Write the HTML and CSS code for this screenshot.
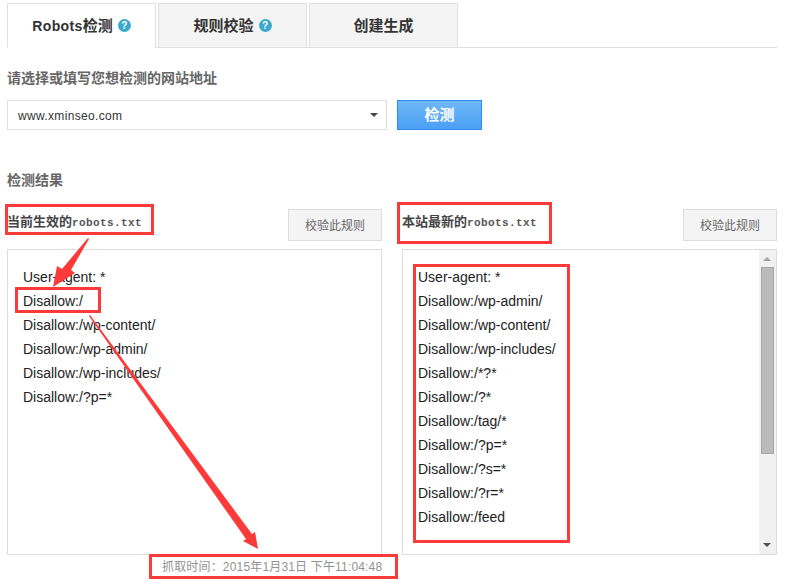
FILE: index.html
```html
<!DOCTYPE html>
<html lang="zh">
<head>
<meta charset="utf-8">
<title>Robots检测</title>
<link rel="stylesheet" href="styles.css">
</head>
<body>
<div class="page">
  <div class="tabs">
    <div class="tab active"><span><span class="tab-en">Robots</span>检测</span><span class="help">?</span></div>
    <div class="tab">规则校验<span class="help">?</span></div>
    <div class="tab">创建生成</div>
  </div>
  <h3 class="label first">请选择或填写您想检测的网站地址</h3>
  <div class="form">
    <div class="select">www.xminseo.com<span class="caret"></span></div>
    <div class="btn-check">检测</div>
  </div>
  <h3 class="label result">检测结果</h3>
  <div class="cols">
    <section class="col">
      <div class="col-head">
        <div class="col-title">当前生效的<span class="mono">robots.txt</span></div>
        <div class="btn-rule">校验此规则</div>
      </div>
      <div class="box">
        <p>User-agent: *</p>
        <p>Disallow:/</p>
        <p>Disallow:/wp-content/</p>
        <p>Disallow:/wp-admin/</p>
        <p>Disallow:/wp-includes/</p>
        <p>Disallow:/?p=*</p>
      </div>
    </section>
    <section class="col">
      <div class="col-head">
        <div class="col-title">本站最新的<span class="mono">robots.txt</span></div>
        <div class="btn-rule">校验此规则</div>
      </div>
      <div class="box box-scroll">
        <div class="lines">
          <p>User-agent: *</p>
          <p>Disallow:/wp-admin/</p>
          <p>Disallow:/wp-content/</p>
          <p>Disallow:/wp-includes/</p>
          <p>Disallow:/*?*</p>
          <p>Disallow:/?*</p>
          <p>Disallow:/tag/*</p>
          <p>Disallow:/?p=*</p>
          <p>Disallow:/?s=*</p>
          <p>Disallow:/?r=*</p>
          <p>Disallow:/feed</p>
        </div>
        <div class="scrollbar">
          <span class="sb-up"></span>
          <span class="sb-thumb"></span>
          <span class="sb-down"></span>
        </div>
      </div>
    </section>
  </div>
  <div class="time">抓取时间：2015年1月31日 下午11:04:48</div>
</div>
<svg class="marks" width="805" height="581" viewBox="0 0 805 581" aria-hidden="true">
  <g class="mark-rect">
    <rect x="6.5" y="205.5" width="146" height="28"/>
    <rect x="398.5" y="203.5" width="152" height="39"/>
    <rect x="16.5" y="288.5" width="83" height="23"/>
    <rect x="414.5" y="265.5" width="154" height="276"/>
    <rect x="150.5" y="555.5" width="246" height="22"/>
  </g>
  <polygon class="mark-fill" points="89,239 71,270 75,273 53,287 57,266 62,269 88,238"/>
  <polygon class="mark-fill" points="90,315 252,534 255,532 258,549 243,541 246,539 89,316"/>
</svg>
</body>
</html>
```
FILE: styles.css
```css
* { box-sizing: border-box; }
html, body { margin: 0; padding: 0; background: #fff; }
body {
  width: 805px;
  height: 581px;
  overflow: hidden;
  position: relative;
  font-family: "Liberation Sans", "Noto Sans CJK SC", sans-serif;
  color: #333;
}
.page { padding: 3px 28px 0 7px; }
.tabs {
  display: flex;
  gap: 2px;
  height: 45px;
  border-bottom: 1px solid #ddd;
}
.tab {
  width: 149px;
  height: 45px;
  padding-bottom: 3px;
  display: flex;
  align-items: center;
  justify-content: center;
  background: #f4f4f4;
  border: 1px solid #e0e0e0;
  font-size: 15px;
  font-weight: bold;
  color: #333;
}
.tab.active { background: #fff; border-bottom-color: #fff; }
.tab-en { font-size: 14px; letter-spacing: 0.4px; }
.help {
  display: inline-block;
  width: 13px;
  height: 13px;
  margin-left: 5px;
  margin-top: 2px;
  border-radius: 50%;
  background: #3ba9cc;
  color: #fff;
  font-size: 10px;
  line-height: 13px;
  text-align: center;
}
.label {
  margin: 0;
  font-size: 14px;
  font-weight: bold;
  line-height: 18px;
  color: #666;
}
.label.first { margin-top: 21px; }
.form {
  display: flex;
  gap: 10px;
  margin-top: 13px;
  width: 475px;
}
.select {
  position: relative;
  width: 380px;
  height: 30px;
  padding-left: 10px;
  border: 1px solid #e0e0e0;
  font-size: 12px;
  letter-spacing: 0.33px;
  line-height: 30px;
  color: #333;
}
.caret {
  position: absolute;
  right: 8px;
  top: 12px;
  border-left: 4px solid transparent;
  border-right: 4px solid transparent;
  border-top: 4px solid #444;
}
.btn-check {
  width: 85px;
  height: 30px;
  background: linear-gradient(#6fb8f6, #4a9ff5);
  border: 1px solid #2a8cf0;
  color: #fff;
  font-size: 15px;
  font-weight: bold;
  line-height: 28px;
  text-align: center;
}
.label.result { margin-top: 41px; }
.cols {
  display: flex;
  gap: 20px;
  margin-top: 20px;
}
.col { width: 375px; }
.col-head {
  display: flex;
  justify-content: space-between;
  align-items: center;
  height: 32px;
}
.col-title {
  font-size: 13px;
  font-weight: bold;
  color: #444;
  margin-top: -9px;
}
.mono {
  font-family: "Liberation Mono", monospace;
  font-size: 11px;
  letter-spacing: 0.4px;
  color: #555;
}
.btn-rule {
  width: 94px;
  height: 32px;
  background: #f4f4f4;
  border: 1px solid #ddd;
  font-size: 12px;
  line-height: 32px;
  text-align: center;
  color: #666;
}
.box {
  margin-top: 8px;
  height: 306px;
  padding: 15px 15px 0;
  border: 1px solid #ddd;
  font-size: 14px;
  color: #222;
  position: relative;
}
.box p { margin: 0; line-height: 24px; height: 24px; }
.box-scroll { display: flex; padding-right: 0; }
.lines { flex: 1; }
.scrollbar {
  position: absolute;
  top: 0;
  right: 0;
  bottom: 0;
  width: 17px;
  background: #f1f1f1;
}
.sb-up, .sb-down {
  position: absolute;
  left: 4px;
  border-left: 4px solid transparent;
  border-right: 4px solid transparent;
}
.sb-up { top: 7px; border-bottom: 4px solid #a3a3a3; }
.sb-down { bottom: 7px; border-top: 4px solid #505050; }
.sb-thumb {
  position: absolute;
  left: 2px;
  right: 2px;
  top: 17px;
  height: 187px;
  background: #bbb;
  border: 1px solid #a8a8a8;
}
.time {
  margin-top: 3px;
  padding-left: 155px;
  font-size: 12px;
  letter-spacing: 0.17px;
  line-height: 18px;
  color: #929292;
}
.marks { position: absolute; left: 0; top: 0; pointer-events: none; }
.mark-rect rect { fill: none; stroke: #fd3a3a; stroke-width: 3; }
.mark-fill { fill: #fd3a3a; }
```
